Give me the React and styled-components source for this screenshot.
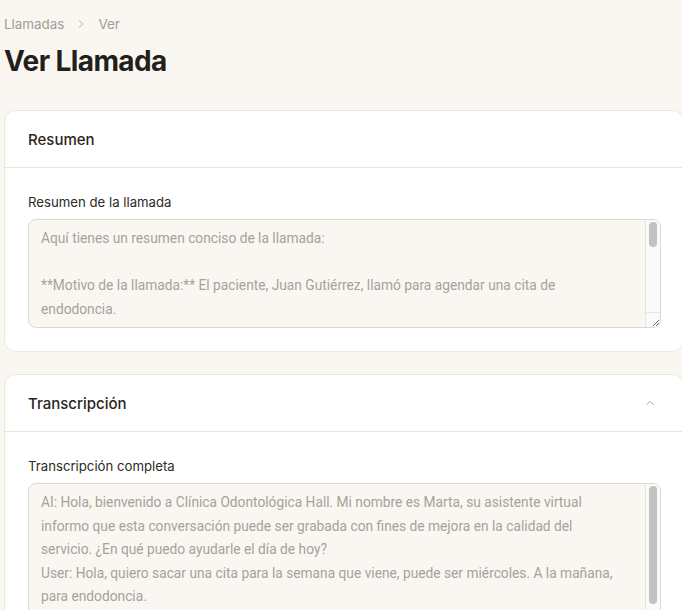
import React from "react";
import styled, { createGlobalStyle } from "styled-components";
import { ChevronRight, ChevronUp } from "lucide-react";

const GlobalStyle = createGlobalStyle`
  html, body {
    margin: 0;
    background: #faf7f2;
    overflow-x: hidden;
  }
  body {
    font-family: Inter, "Noto Sans", sans-serif;
    color: #2a2521;
  }
  * { box-sizing: border-box; }
`;

const summaryText = `Aquí tienes un resumen conciso de la llamada:

**Motivo de la llamada:** El paciente, Juan Gutiérrez, llamó para agendar una cita de endodoncia.

**Detalles:**
- Preferencia de día: miércoles de la semana que viene.
- Horario preferido: por la mañana.
- Tratamiento solicitado: endodoncia.

**Resultado:** La asistente virtual Marta ofreció los horarios disponibles y se confirmó la cita para el miércoles a las 10:00 h.

**Próximos pasos:** El paciente recibirá un recordatorio por SMS el día anterior a la cita.`;

const transcriptText = `AI: Hola, bienvenido a Clínica Odontológica Hall. Mi nombre es Marta, su asistente virtual informo que esta conversación puede ser grabada con fines de mejora en la calidad del servicio. ¿En qué puedo ayudarle el día de hoy?
User: Hola, quiero sacar una cita para la semana que viene, puede ser miércoles. A la mañana, para endodoncia.
AI: Perfecto, déjeme revisar la disponibilidad para el miércoles por la mañana.
AI: Tenemos disponible a las 10:00 y a las 11:30. ¿Cuál prefiere?
User: A las diez está bien.`;

const Page = styled.div`
  padding: 12px 0 40px 4px;
`;

const Breadcrumb = styled.nav`
  display: flex;
  align-items: center;
  gap: 7px;
  height: 24px;
  font-size: 13.4px;
  color: #a39b93;
  svg {
    color: #c6b8a6;
    margin: 0 3px;
  }
`;

const Title = styled.h1`
  margin: 7px 0 31px;
  font-size: 28px;
  line-height: 36px;
  font-weight: 700;
  letter-spacing: -0.6px;
  color: #231f1c;
`;

const Card = styled.section`
  width: 680px;
  background: #fff;
  border: 1px solid #ece7e1;
  border-radius: 12px;
  margin-bottom: 22px;
`;

const CardHeader = styled.header`
  display: flex;
  align-items: center;
  justify-content: space-between;
  height: 57px;
  padding: 0 23px;
  border-bottom: 1px solid #ece5dc;
  svg {
    color: #a09a94;
    margin-right: 3px;
  }
`;

const CardTitle = styled.h2`
  margin: 0;
  font-size: 15px;
  font-weight: 500;
  color: #2a2521;
`;

const CardBody = styled.div`
  padding: 24px 23px 23px;
`;

const Label = styled.label`
  display: block;
  font-size: 13.2px;
  line-height: 20px;
  color: #2e2925;
  margin-bottom: 7px;
`;

const Field = styled.div`
  display: flex;
  width: 633px;
  height: ${p => p.$height}px;
  border: 1px solid #ddd8d2;
  border-radius: 8px;
  background: #faf7f2;
  overflow: hidden;
`;

const TextArea = styled.textarea`
  flex: 1;
  display: block;
  height: 100%;
  padding: 7px 20px 7px 12px;
  border: none;
  background: transparent;
  color: #a8a19a;
  font-family: Roboto, "Noto Sans", sans-serif;
  font-size: 13.75px;
  line-height: 23.6px;
  resize: none;
  outline: none;
  overflow: hidden;
`;

const ScrollTrack = styled.div`
  display: flex;
  flex-direction: column;
  align-items: center;
  width: 15px;
  background: #fafafa;
  border-left: 1px solid #e6e6e6;
  padding-top: 2px;
`;

const Thumb = styled.div`
  width: 8px;
  height: ${p => p.$size}px;
  border-radius: 4px;
  background: #c2c2c2;
`;

const Resizer = styled.div`
  margin-top: auto;
  width: 100%;
  height: 15px;
  border-top: 1px solid #e6e6e6;
  display: flex;
  align-items: flex-end;
  justify-content: flex-end;
  svg {
    display: block;
  }
`;

const Section = ({ title, label, text, height, thumb, collapsible }) => (
  <Card>
    <CardHeader>
      <CardTitle>{title}</CardTitle>
      {collapsible && <ChevronUp size={14} strokeWidth={1.4} />}
    </CardHeader>
    <CardBody>
      <Label>{label}</Label>
      <Field $height={height}>
        <TextArea readOnly defaultValue={text} />
        <ScrollTrack>
          <Thumb $size={thumb} />
          <Resizer>
            <svg width="10" height="10" viewBox="0 0 10 10">
              <path d="M9 3 L3 9 M9 6 L6 9" stroke="#6f6f6f" strokeWidth="1" />
            </svg>
          </Resizer>
        </ScrollTrack>
      </Field>
    </CardBody>
  </Card>
);

export default function App() {
  return (
    <>
      <GlobalStyle />
      <Page>
        <Breadcrumb>
          <span>Llamadas</span>
          <ChevronRight size={14} strokeWidth={1.75} />
          <span>Ver</span>
        </Breadcrumb>
        <Title>Ver Llamada</Title>
        <Section
          title="Resumen"
          label="Resumen de la llamada"
          text={summaryText}
          height={109}
          thumb={25}
        />
        <Section
          title="Transcripción"
          label="Transcripción completa"
          text={transcriptText}
          height={200}
          thumb={118}
          collapsible
        />
      </Page>
    </>
  );
}
